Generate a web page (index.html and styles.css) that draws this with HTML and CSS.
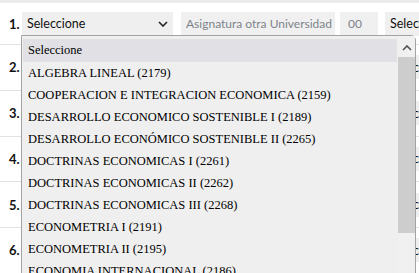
FILE: index.html
```html
<!DOCTYPE html>
<html lang="es">
<head>
<meta charset="utf-8">
<link rel="stylesheet" href="styles.css">
</head>
<body>
<div class="page">
  <div class="rows">
    <div class="row first">
      <span class="num">1.</span>
      <div class="select">
        <span>Seleccione</span>
        <svg class="chev" width="10" height="6" viewBox="0 0 10 6"><path d="M1 1 L5 5 L9 1" fill="none" stroke="#222" stroke-width="1.6"/></svg>
      </div>
      <div class="input placeholder">Asignatura otra Universidad</div>
      <div class="credits placeholder">00</div>
      <div class="select third"><span>Seleccione</span></div>
    </div>
    <div class="row">
      <span class="num">2.</span>
      <div class="select"><span>Seleccione</span></div>
      <div class="input placeholder">Asignatura otra Universidad</div>
      <div class="credits placeholder">00</div>
      <div class="select third"><span>Seleccione</span></div>
    </div>
    <div class="row">
      <span class="num">3.</span>
      <div class="select"><span>Seleccione</span></div>
      <div class="input placeholder">Asignatura otra Universidad</div>
      <div class="credits placeholder">00</div>
      <div class="select third"><span>Seleccione</span></div>
    </div>
    <div class="row">
      <span class="num">4.</span>
      <div class="select"><span>Seleccione</span></div>
      <div class="input placeholder">Asignatura otra Universidad</div>
      <div class="credits placeholder">00</div>
      <div class="select third"><span>Seleccione</span></div>
    </div>
    <div class="row">
      <span class="num">5.</span>
      <div class="select"><span>Seleccione</span></div>
      <div class="input placeholder">Asignatura otra Universidad</div>
      <div class="credits placeholder">00</div>
      <div class="select third"><span>Seleccione</span></div>
    </div>
    <div class="row">
      <span class="num">6.</span>
      <div class="select"><span>Seleccione</span></div>
      <div class="input placeholder">Asignatura otra Universidad</div>
      <div class="credits placeholder">00</div>
      <div class="select third"><span>Seleccione</span></div>
    </div>
  </div>

  <div class="dropdown">
    <ul class="options">
      <li class="active">Seleccione</li>
      <li>ALGEBRA LINEAL (2179)</li>
      <li>COOPERACION E INTEGRACION ECONOMICA (2159)</li>
      <li>DESARROLLO ECONOMICO SOSTENIBLE I (2189)</li>
      <li>DESARROLLO ECONÓMICO SOSTENIBLE II (2265)</li>
      <li>DOCTRINAS ECONOMICAS I (2261)</li>
      <li>DOCTRINAS ECONOMICAS II (2262)</li>
      <li>DOCTRINAS ECONOMICAS III (2268)</li>
      <li>ECONOMETRIA I (2191)</li>
      <li>ECONOMETRIA II (2195)</li>
      <li>ECONOMIA INTERNACIONAL (2186)</li>
    </ul>
    <div class="scrollbar">
      <div class="arrow">
        <svg width="10" height="6" viewBox="0 0 10 6"><path d="M1 5 L5 1 L9 5" fill="none" stroke="#505050" stroke-width="1.6"/></svg>
      </div>
      <div class="thumb"></div>
    </div>
  </div>
</div>
</body>
</html>
```
FILE: styles.css
```css
* { box-sizing: border-box; }
html, body { margin: 0; padding: 0; background: #fff; }
body {
  font-family: "Lato", "Noto Sans", sans-serif;
  font-size: 12.5px;
  color: #111;
  overflow: hidden;
}
.page { position: relative; width: 419px; height: 273px; overflow: hidden; }
.rows { display: flex; flex-direction: column; }
.row {
  display: flex;
  align-items: center;
  height: 45.75px;
  border-bottom: 1px solid #e2e2e2;
  white-space: nowrap;
}
.row.first { height: 45px; border-top: 3px solid #ebebeb; }
.num {
  width: 22px;
  padding-left: 9px;
  font-weight: 700;
  font-size: 13px;
  flex: none;
}
.select {
  flex: none;
  width: 151px;
  height: 24px;
  background: #efefef;
  display: flex;
  align-items: center;
  justify-content: space-between;
  padding: 0 5px 0 5px;
  overflow: hidden;
}
.input {
  flex: none;
  width: 154px;
  height: 24px;
  margin-left: 8px;
  background: #f0f0f0;
  display: flex;
  align-items: center;
  padding-left: 5px;
  font-size: 12px;
}
.credits {
  flex: none;
  width: 38px;
  height: 24px;
  margin-left: 5px;
  background: #f0f0f0;
  display: flex;
  align-items: center;
  padding-left: 8px;
  font-size: 12px;
}
.placeholder { color: #7d838a; }
.select.third { margin-left: 7px; width: 120px; }
.dropdown {
  position: absolute;
  left: 21px;
  top: 35px;
  width: 395px;
  height: 260px;
  background: #efefef;
  border: 1px solid #a3a3a3;
  border-radius: 0 5px 0 0;
  display: flex;
  padding-top: 3px;
}
.options {
  list-style: none;
  margin: 0;
  padding: 0 0 0 1px;
  flex: 1;
  font-family: "Liberation Serif", "Times New Roman", serif;
  font-size: 12.5px;
  color: #000;
}
.options li {
  height: 22px;
  line-height: 22px;
  padding-left: 5px;
  white-space: nowrap;
}
.options li.active { background: #e0e0e5; height: 23px; line-height: 23px; margin-right: 1px; }
.scrollbar {
  flex: none;
  width: 17px;
  margin-top: -3px;
  background: #f0f0f0;
  display: flex;
  flex-direction: column;
}
.arrow {
  height: 21px;
  display: flex;
  align-items: center;
  justify-content: center;
  padding-top: 2px;
}
.thumb {
  height: 176px;
  background: #cdcdcd;
}
```
